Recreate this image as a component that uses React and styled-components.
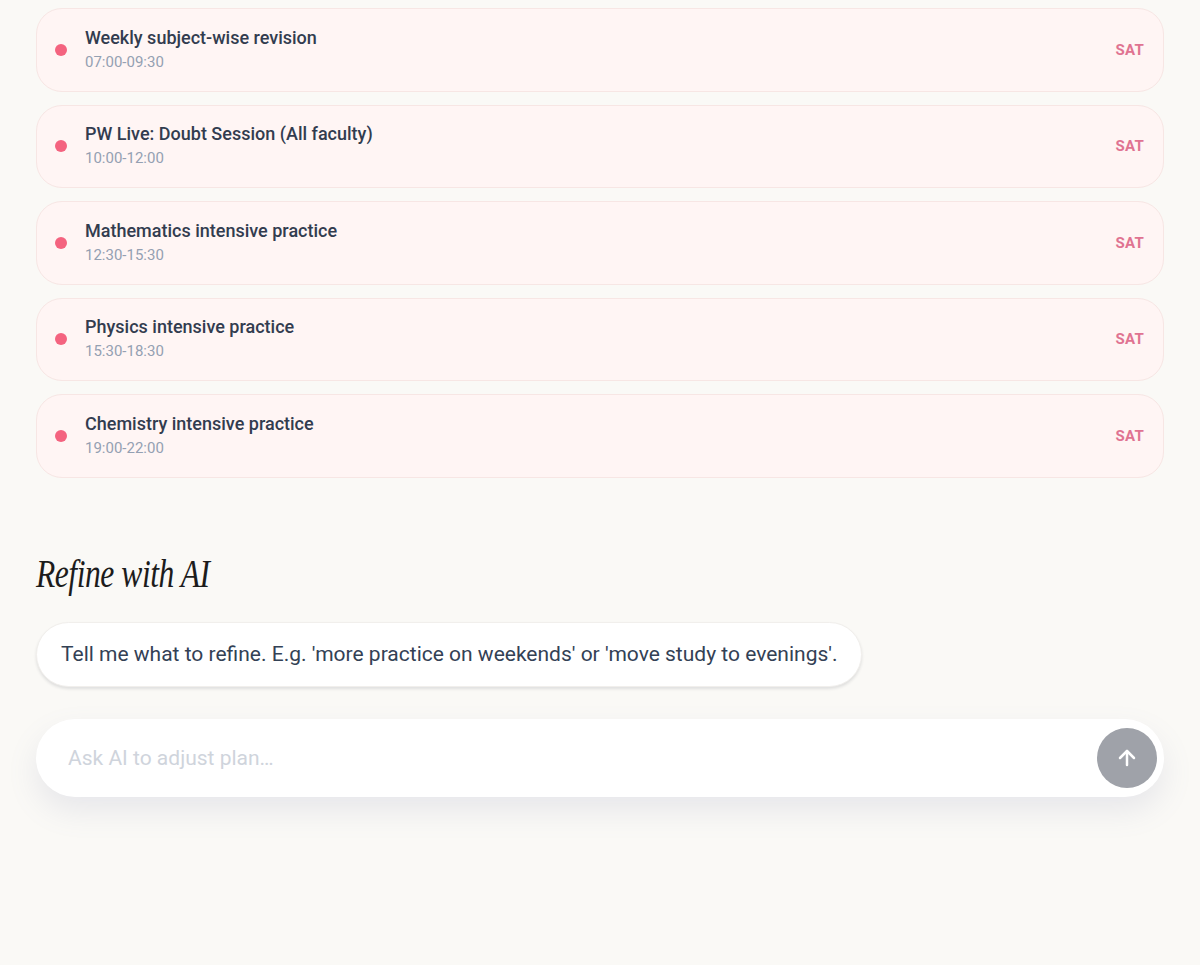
import styled, { createGlobalStyle } from "styled-components";

const GlobalStyle = createGlobalStyle`
  html, body {
    margin: 0;
    padding: 0;
    background: #faf9f6;
    font-family: Roboto, "Liberation Sans", sans-serif;
  }
`;

const Page = styled.div`
  box-sizing: border-box;
  min-height: 965px;
  padding: 8px 36px 0 36px;
  background: #faf9f6;
`;

const SessionList = styled.div`
  display: flex;
  flex-direction: column;
  gap: 13px;
`;

const SessionCard = styled.div`
  display: flex;
  align-items: center;
  box-sizing: border-box;
  height: 83.5px;
  padding: 0 19px 2px 18px;
  background: #fff5f4;
  border: 1px solid #f7e6e4;
  border-radius: 26px;
`;

const Dot = styled.span`
  width: 12px;
  height: 12px;
  border-radius: 50%;
  background: #f4637f;
  flex-shrink: 0;
  margin: 2px 18px 0 0;
`;

const SessionText = styled.div`
  display: flex;
  flex-direction: column;
  flex: 1;
`;

const SessionTitle = styled.div`
  font-size: 18px;
  font-weight: 500;
  color: #323c4f;
  line-height: 24px;
`;

const SessionTime = styled.div`
  margin-top: 2px;
  font-size: 15px;
  color: #94a0b2;
  line-height: 20px;
`;

const DayTag = styled.span`
  margin-top: 2px;
  font-size: 15px;
  font-weight: 700;
  color: #e07391;
  letter-spacing: 0.3px;
`;

const Heading = styled.h2`
  margin: 70px 0 24px 0;
  font-family: "Liberation Serif", serif;
  font-style: italic;
  font-weight: 400;
  font-size: 41px;
  line-height: 50px;
  letter-spacing: -0.6px;
  color: #1c1c1c;
  transform: scaleX(0.77);
  transform-origin: left center;
  white-space: nowrap;
`;

const Bubble = styled.div`
  display: inline-block;
  box-sizing: border-box;
  height: 65px;
  padding: 0 24px;
  line-height: 63px;
  background: #ffffff;
  border: 1px solid #f1efec;
  border-radius: 33px;
  box-shadow: 0 2px 3px rgba(30, 40, 60, 0.12);
  font-size: 21px;
  color: #334155;
`;

const InputBar = styled.div`
  display: flex;
  align-items: center;
  box-sizing: border-box;
  margin-top: 32px;
  height: 78px;
  padding: 0 7px 0 30px;
  background: #ffffff;
  border-radius: 39px;
  box-shadow: 0 14px 30px rgba(120, 130, 170, 0.14);
`;

const Input = styled.input`
  flex: 1;
  border: none;
  outline: none;
  background: transparent;
  font-family: Roboto, "Liberation Sans", sans-serif;
  font-size: 21px;
  color: #334155;
  &::placeholder {
    color: #cfd4dc;
  }
`;

const SendButton = styled.button`
  width: 60px;
  height: 60px;
  border: none;
  border-radius: 50%;
  background: #9fa2a9;
  display: flex;
  align-items: center;
  justify-content: center;
  padding: 0;
  cursor: pointer;
`;

const sessions = [
  { title: "Weekly subject-wise revision", time: "07:00-09:30" },
  { title: "PW Live: Doubt Session (All faculty)", time: "10:00-12:00" },
  { title: "Mathematics intensive practice", time: "12:30-15:30" },
  { title: "Physics intensive practice", time: "15:30-18:30" },
  { title: "Chemistry intensive practice", time: "19:00-22:00" },
];

const App = () => {
  return (
    <Page>
      <GlobalStyle />
      <SessionList>
        {sessions.map((s) => (
          <SessionCard key={s.title}>
            <Dot />
            <SessionText>
              <SessionTitle>{s.title}</SessionTitle>
              <SessionTime>{s.time}</SessionTime>
            </SessionText>
            <DayTag>SAT</DayTag>
          </SessionCard>
        ))}
      </SessionList>

      <Heading>Refine with AI</Heading>

      <Bubble>
        Tell me what to refine. E.g. 'more practice on weekends' or 'move study to evenings'.
      </Bubble>

      <InputBar>
        <Input placeholder="Ask AI to adjust plan…" />
        <SendButton aria-label="Send">
          <svg width="24" height="24" viewBox="0 0 24 24" fill="none" stroke="#ffffff" strokeWidth="2.5" strokeLinecap="round" strokeLinejoin="round">
            <path d="M12 19V5" />
            <path d="M5 12l7-7 7 7" />
          </svg>
        </SendButton>
      </InputBar>
    </Page>
  );
};

export default App;
